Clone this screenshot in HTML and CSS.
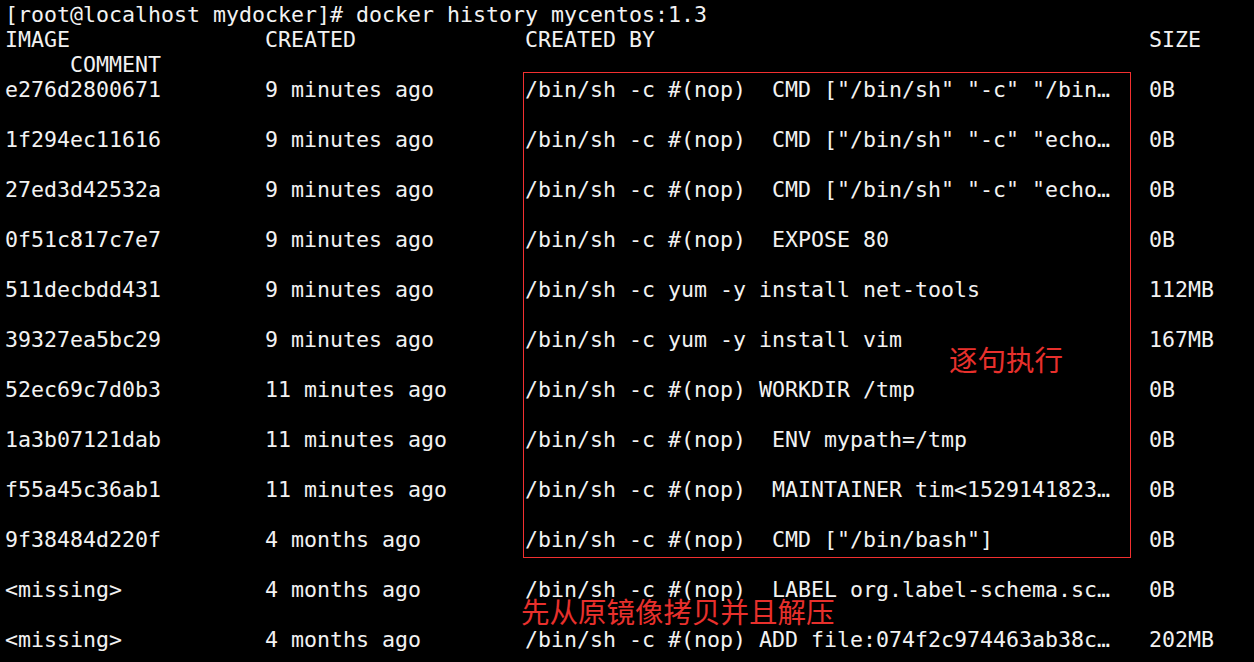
FILE: index.html
```html
<!DOCTYPE html>
<html lang="zh-CN">
<head>
<meta charset="utf-8">
<title>docker history</title>
<link rel="stylesheet" href="styles.css">
</head>
<body>
<div class="term">
  <div class="line">[root@localhost mydocker]# docker history mycentos:1.3</div>
  <div class="row"><span>IMAGE</span><span>CREATED</span><span>CREATED BY</span><span>SIZE</span></div>
  <div class="line wrap">COMMENT</div>
  <div class="rows">
    <div class="row"><span>e276d2800671</span><span>9 minutes ago</span><span>/bin/sh -c #(nop)  CMD ["/bin/sh" "-c" "/bin…</span><span>0B</span></div>
    <div class="row"><span>1f294ec11616</span><span>9 minutes ago</span><span>/bin/sh -c #(nop)  CMD ["/bin/sh" "-c" "echo…</span><span>0B</span></div>
    <div class="row"><span>27ed3d42532a</span><span>9 minutes ago</span><span>/bin/sh -c #(nop)  CMD ["/bin/sh" "-c" "echo…</span><span>0B</span></div>
    <div class="row"><span>0f51c817c7e7</span><span>9 minutes ago</span><span>/bin/sh -c #(nop)  EXPOSE 80</span><span>0B</span></div>
    <div class="row"><span>511decbdd431</span><span>9 minutes ago</span><span>/bin/sh -c yum -y install net-tools</span><span>112MB</span></div>
    <div class="row"><span>39327ea5bc29</span><span>9 minutes ago</span><span>/bin/sh -c yum -y install vim</span><span>167MB</span></div>
    <div class="row"><span>52ec69c7d0b3</span><span>11 minutes ago</span><span>/bin/sh -c #(nop) WORKDIR /tmp</span><span>0B</span></div>
    <div class="row"><span>1a3b07121dab</span><span>11 minutes ago</span><span>/bin/sh -c #(nop)  ENV mypath=/tmp</span><span>0B</span></div>
    <div class="row"><span>f55a45c36ab1</span><span>11 minutes ago</span><span>/bin/sh -c #(nop)  MAINTAINER tim&lt;1529141823…</span><span>0B</span></div>
    <div class="row"><span>9f38484d220f</span><span>4 months ago</span><span>/bin/sh -c #(nop)  CMD ["/bin/bash"]</span><span>0B</span></div>
    <div class="row"><span>&lt;missing&gt;</span><span>4 months ago</span><span>/bin/sh -c #(nop)  LABEL org.label-schema.sc…</span><span>0B</span></div>
    <div class="row"><span>&lt;missing&gt;</span><span>4 months ago</span><span>/bin/sh -c #(nop) ADD file:074f2c974463ab38c…</span><span>202MB</span></div>
  </div>
  <div class="mark-box"></div>
  <div class="note note-exec">逐句执行</div>
  <div class="note note-copy">先从原镜像拷贝并且解压</div>
</div>
</body>
</html>
```

FILE: styles.css
```css
html, body {
  margin: 0;
  padding: 0;
  background: #000;
}

.term {
  position: relative;
  width: 1254px;
  height: 662px;
  overflow: hidden;
  box-sizing: border-box;
  padding: 2px 0 0 5px;
  color: #f2f2f2;
  font-family: "DejaVu Sans Mono", "Liberation Mono", monospace;
  font-size: 21.6px;
  line-height: 25px;
}

.line {
  height: 25px;
  white-space: pre;
}

.wrap {
  padding-left: 5ch;
}

.rows {
  display: flex;
  flex-direction: column;
  gap: 25px;
}

.row {
  display: grid;
  grid-template-columns: 20ch 20ch 48ch auto;
  height: 25px;
}

.row span {
  white-space: pre;
}

.mark-box {
  position: absolute;
  left: 523px;
  top: 72px;
  width: 606px;
  height: 484px;
  border: 1px solid #f23030;
}

.note {
  position: absolute;
  color: #e8302c;
  font-family: "Noto Sans CJK SC", sans-serif;
  font-size: 28.5px;
  line-height: 1;
  white-space: nowrap;
}

.note-exec {
  left: 949px;
  top: 345px;
}

.note-copy {
  left: 521px;
  top: 597px;
}
```
